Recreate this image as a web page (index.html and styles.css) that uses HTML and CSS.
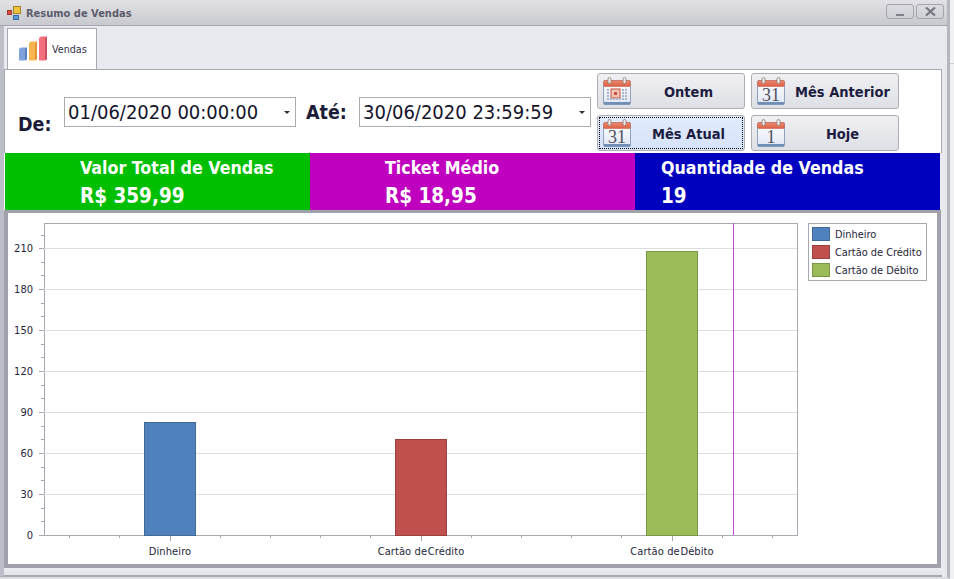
FILE: index.html
```html
<!DOCTYPE html>
<html lang="pt">
<head>
<meta charset="utf-8">
<title>Resumo de Vendas</title>
<link rel="stylesheet" href="styles.css">
</head>
<body>
<svg class="defs" width="0" height="0" aria-hidden="true">
  <defs>
    <linearGradient id="calbody" x1="0" y1="0" x2="0" y2="1"><stop offset="0" stop-color="#ffffff"/><stop offset="1" stop-color="#dfe6f2"/></linearGradient>
    <linearGradient id="calhead" x1="0" y1="0" x2="0" y2="1"><stop offset="0" stop-color="#ee8a70"/><stop offset="1" stop-color="#d95f45"/></linearGradient>
    <symbol id="calframe" viewBox="0 0 28 28">
      <rect x="0.5" y="3.5" width="27" height="24" rx="1.5" fill="url(#calbody)" stroke="#8fa3bf"/>
      <rect x="1" y="25" width="26" height="2.5" fill="#6f8db5"/>
      <rect x="0.5" y="3.5" width="27" height="6" rx="1.5" fill="url(#calhead)" stroke="#c9684f" stroke-width="0.6"/>
      <rect x="5" y="0.5" width="3" height="6" rx="1.5" fill="#f3ece8" stroke="#8a8078" stroke-width="0.8"/>
      <rect x="20" y="0.5" width="3" height="6" rx="1.5" fill="#f3ece8" stroke="#8a8078" stroke-width="0.8"/>
    </symbol>
  </defs>
</svg>
<div class="window">
  <header class="titlebar">
    <svg class="appicon" width="14" height="14" viewBox="0 0 14 14" aria-hidden="true">
      <rect x="0.5" y="4.5" width="4" height="4" fill="#e8483a" stroke="#9a3a30"/>
      <rect x="6.5" y="0.5" width="7" height="7" fill="#f2c23e" stroke="#a08428"/>
      <rect x="6.5" y="9.5" width="5" height="4" fill="#5c9ae0" stroke="#3c6aa0"/>
    </svg>
    <span class="title">Resumo de Vendas</span>
    <div class="wincontrols">
      <span class="winbtn"><svg width="10" height="10" viewBox="0 0 10 10" aria-hidden="true"><rect x="1" y="7" width="8" height="2" fill="#80808a"/></svg></span>
      <span class="winbtn"><svg width="11" height="9" viewBox="0 0 11 9" aria-hidden="true"><path d="M1 0.5 L10 8.5 M10 0.5 L1 8.5" stroke="#777782" stroke-width="2.2" fill="none"/></svg></span>
    </div>
  </header>
  <nav class="tabstrip">
    <div class="tab">
      <svg class="tabicon" width="29" height="25" viewBox="0 0 29 25" aria-hidden="true">
        <path d="M0 13 l2 -1.500 h6 v11.500 l-2 1.500 h-6z" fill="#7ea3dc"/><path d="M6 13 l2 -1.500 v11.500 l-2 1.500z" fill="#5c82bd"/>
        <path d="M10 7 l2 -1.500 h6 v17.500 l-2 1.500 h-6z" fill="#f9b650"/><path d="M16 7 l2 -1.500 v17.500 l-2 1.500z" fill="#dd9636"/>
        <path d="M20 2 l2 -1.500 h6 v22.500 l-2 1.500 h-6z" fill="#f3707f"/><path d="M26 2 l2 -1.500 v22.500 l-2 1.500z" fill="#cf5060"/>
      </svg>
      <span class="tablabel">Vendas</span>
    </div>
  </nav>
  <main class="panel">
    <section class="filters">
      <span class="label label-de">De:</span>
      <div class="datebox"><span>01/06/2020 00:00:00</span><i class="caret"></i></div>
      <span class="label label-ate">Até:</span>
      <div class="datebox"><span>30/06/2020 23:59:59</span><i class="caret"></i></div>
      <div class="quick">
        <button class="qbtn" type="button">
          <svg class="cal" width="28" height="28" viewBox="0 0 28 28" aria-hidden="true">
            <use href="#calframe"/>
            <rect x="8" y="12" width="9" height="9" fill="#f4c4b8" stroke="#c4523c"/><rect x="11" y="15" width="3" height="3" fill="#c4523c"/>
            <path d="M4 13h2M4 16h2M4 19h2M4 22h20M19 13h5M19 16h5M19 19h5" stroke="#a9b6cc" stroke-width="2" stroke-dasharray="2 1" fill="none"/>
          </svg>
          <span>Ontem</span>
        </button>
        <button class="qbtn" type="button">
          <svg class="cal" width="28" height="28" viewBox="0 0 28 28" aria-hidden="true">
            <use href="#calframe"/><text class="calnum" x="14" y="24">31</text>
          </svg>
          <span>Mês Anterior</span>
        </button>
        <button class="qbtn is-focused" type="button">
          <svg class="cal" width="28" height="28" viewBox="0 0 28 28" aria-hidden="true">
            <use href="#calframe"/><text class="calnum" x="14" y="24">31</text>
          </svg>
          <span>Mês Atual</span>
        </button>
        <button class="qbtn" type="button">
          <svg class="cal" width="28" height="28" viewBox="0 0 28 28" aria-hidden="true">
            <use href="#calframe"/><text class="calnum" x="14" y="24">1</text>
          </svg>
          <span>Hoje</span>
        </button>
      </div>
    </section>
    <section class="stats">
      <div class="stat stat-green"><div class="stat-name">Valor Total de Vendas</div><div class="stat-value">R$ 359,99</div></div>
      <div class="stat stat-magenta"><div class="stat-name">Ticket Médio</div><div class="stat-value">R$ 18,95</div></div>
      <div class="stat stat-blue"><div class="stat-name">Quantidade de Vendas</div><div class="stat-value">19</div></div>
    </section>
    <section class="chartframe">
      <svg class="chart" width="929" height="351" viewBox="8 213 929 351" role="img" aria-label="Vendas por forma de pagamento">
        <rect class="plot" x="44.500" y="223.500" width="753" height="312"/>
        <path class="grid" d="M44 248.500H797M44 289.500H797M44 330.500H797M44 371.500H797M44 412.500H797M44 453.500H797M44 494.500H797"/>
        <path class="axis" d="M39 248.500H44M39 289.500H44M39 330.500H44M39 371.500H44M39 412.500H44M39 453.500H44M39 494.500H44M39 535.500H44"/>
        <path class="axis" d="M41 235.500H44M41 262.500H44M41 275.500H44M41 303.500H44M41 316.500H44M41 344.500H44M41 357.500H44M41 385.500H44M41 398.500H44M41 426.500H44M41 439.500H44M41 467.500H44M41 480.500H44M41 508.500H44M41 521.500H44"/>
        <path class="axis" d="M170.500 535V541M421.500 535V541M672.500 535V541"/>
        <path class="axis" d="M69.500 535V538M119.500 535V538M220.500 535V538M270.500 535V538M320.500 535V538M370.500 535V538M471.500 535V538M521.500 535V538M571.500 535V538M621.500 535V538M722.500 535V538M772.500 535V538"/>
        <rect class="bar bar-blue" x="144.500" y="422.500" width="51" height="113"/>
        <rect class="bar bar-red" x="395.500" y="439.500" width="51" height="96"/>
        <rect class="bar bar-green" x="646.500" y="251.500" width="51" height="284"/>
        <rect class="cursorline" x="733" y="223" width="1" height="312"/>
        <g class="ylabels">
          <text x="33" y="252">210</text><text x="33" y="293">180</text><text x="33" y="334">150</text><text x="33" y="375">120</text><text x="33" y="416">90</text><text x="33" y="457">60</text><text x="33" y="498">30</text><text x="33" y="539">0</text>
        </g>
        <g class="xlabels">
          <text x="170" y="555">Dinheiro</text><text x="421" y="555">Cartão de <tspan dx="-2.500">Crédito</tspan></text><text x="672" y="555">Cartão de <tspan dx="-2.500">Débito</tspan></text>
        </g>
        <rect class="legend" x="808.500" y="223.500" width="118" height="57"/>
        <rect class="bar bar-blue" x="812.500" y="227.500" width="17" height="13"/>
        <rect class="bar bar-red" x="812.500" y="245.500" width="17" height="13"/>
        <rect class="bar bar-green" x="812.500" y="263.500" width="17" height="13"/>
        <g class="legendtext">
          <text x="835" y="238">Dinheiro</text><text x="835" y="256">Cartão de Crédito</text><text x="835" y="274">Cartão de Débito</text>
        </g>
      </svg>
    </section>
  </main>
</div>
</body>
</html>
```
FILE: styles.css
```css
* { box-sizing: border-box; }
html, body { margin: 0; padding: 0; }
body {
  width: 954px;
  height: 579px;
  overflow: hidden;
  background: linear-gradient(#cfd0d6, #cfd0d6) 0 63px / 100% 1px no-repeat, #f1f1f4;
  font-family: "DejaVu Sans Condensed", "DejaVu Sans", sans-serif;
  color: #1c1c38;
}
.defs { display: block; height: 0; }
.window {
  width: 950px;
  height: 579px;
  display: flex;
  flex-direction: column;
  background: #e9eaef;
  border-right: 3px solid #b4b6c0;
  border-bottom: 2px solid #dcdde3;
}
.titlebar {
  height: 26px;
  flex: none;
  display: flex;
  align-items: center;
  padding: 0 6px 0 7px;
  background: linear-gradient(#e2e2e6, #c8c9ce);
  border-bottom: 1px solid #a6a7ae;
}
.appicon { margin-right: 5px; }
.title { font-size: 11px; font-weight: bold; color: #5c5c6c; padding-top: 2px; }
.wincontrols { margin-left: auto; display: flex; gap: 2px; margin-bottom: 2px; margin-right: -3px; }
.winbtn {
  width: 28px;
  height: 15px;
  display: flex;
  align-items: center;
  justify-content: center;
  border: 1px solid #a4a5ac;
  border-radius: 3px;
  background: linear-gradient(#dcdde2, #cfd0d5);
}
.tabstrip {
  height: 43px;
  flex: none;
  display: flex;
  align-items: flex-end;
  margin-right: 5px;
  border-left: 4px solid #bcbec8;
  padding-left: 3px;
}
.tab {
  width: 90px;
  height: 42px;
  margin-bottom: -1px;
  display: flex;
  align-items: center;
  padding: 0 0 2px 11px;
  gap: 4px;
  background: #fff;
  border: 1px solid #a8a9b0;
  border-bottom: 0;
  position: relative;
  font-size: 10.700px;
  color: #33334a;
}
.tablabel { padding-top: 2px; }
.panel {
  flex: 1;
  min-height: 0;
  display: flex;
  flex-direction: column;
  margin-right: 5px;
  border-left: 4px solid #bcbec8;
  border-bottom: 2px solid #a8a9b2;
  background: linear-gradient(#eeeff3, #e2e3e9) 0 100% / 100% 8px no-repeat, #e9eaef;
}
.filters {
  height: 84px;
  flex: none;
  position: relative;
  display: flex;
  align-items: flex-start;
  background: #fff;
  border-top: 1px solid #a8a9b0;
  border-left: 1px solid #a8a9b0;
  border-right: 1px solid #a8a9b0;
  padding-left: 13px;
}
.label { font-size: 19.500px; font-weight: bold; color: #1c1c38; line-height: 24px; }
.label-de { margin-top: 43px; width: 46px; flex: none; }
.label-ate { margin-top: 31px; width: 53px; flex: none; margin-left: 10px; }
.datebox {
  width: 232px;
  height: 30px;
  margin-top: 27px;
  flex: none;
  display: flex;
  align-items: center;
  justify-content: space-between;
  padding: 0 5px 0 3px;
  border: 1px solid #ababb2;
  background: #fff;
  font-size: 20px;
  color: #14142c;
}
.caret {
  width: 0;
  height: 0;
  border: 3px solid transparent;
  border-top: 3px solid #333;
  border-bottom: 0;
}
.quick {
  margin-left: 6px;
  margin-top: 3px;
  display: grid;
  grid-template-columns: 148px 148px;
  grid-auto-rows: 36px;
  gap: 6px;
}
.qbtn {
  display: flex;
  align-items: center;
  padding: 0 0 0 5px;
  border: 1px solid #adadb4;
  border-radius: 3px;
  background: linear-gradient(#f0f0f3, #dfe0e5);
  font-family: inherit;
  font-size: 14.500px;
  font-weight: bold;
  color: #1c1c40;
}
.qbtn span { flex: 1; text-align: center; white-space: nowrap; padding: 1px 0 0 2px; }
.cal { flex: none; }
.calnum { font-family: "Liberation Serif", serif; font-size: 18px; font-weight: normal; fill: #505060; text-anchor: middle; }
.is-focused {
  background: linear-gradient(#e2ecfd, #d6e2fa);
  outline: 1px dotted #000;
  outline-offset: -3px;
}
.stats {
  height: 57px;
  flex: none;
  display: flex;
  border-left: 1px solid #fff;
  color: #fff;
}
.stat { padding-top: 4px; font-weight: bold; }
.stat-name { font-size: 17.700px; line-height: 22px; }
.stat-value { font-size: 20.500px; line-height: 28px; margin-top: 3px; }
.stat-green { width: 305px; background: #00bf00; padding-left: 75px; }
.stat-magenta { width: 325px; background: #bf00bf; padding-left: 75px; }
.stat-blue { width: 305px; background: #0000bf; padding-left: 26px; }
.chartframe {
  flex: none;
  height: 358px;
  width: 937px;
  border: 3px solid #a0a1aa;
  border-bottom-width: 4px;
  border-right-width: 4px;
  border-left-width: 4px;
  background: #fff;
}
.chart { display: block; }
.plot { fill: #fff; stroke: #a8a8b0; }
.grid { stroke: #dddde0; fill: none; }
.axis { stroke: #a8a8b0; fill: none; }
.bar { stroke-width: 1; }
.bar-blue { fill: #4f81bd; stroke: #3f6797; }
.bar-red { fill: #c0504d; stroke: #9a403e; }
.bar-green { fill: #9bbb59; stroke: #7c9647; }
.cursorline { fill: #c04ad0; }
.legend { fill: #fff; stroke: #a8a8b0; }
.ylabels text, .xlabels text { font-size: 11px; fill: #25253a; }
.legendtext text { font-size: 10.900px; fill: #25253a; }
.ylabels text { text-anchor: end; }
.xlabels text { text-anchor: middle; letter-spacing: 0.1px; }
```
